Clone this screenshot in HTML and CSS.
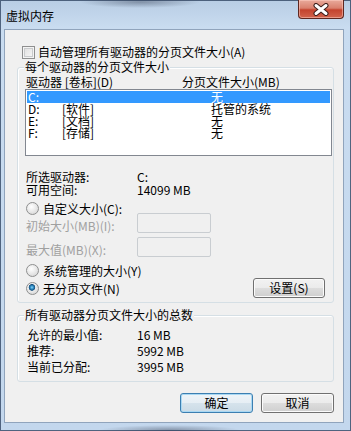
FILE: index.html
```html
<!DOCTYPE html>
<html lang="zh-CN">
<head>
    <meta charset="UTF-8">
    <title>虚拟内存</title>
    <link rel="stylesheet" href="styles.css">
</head>
<body>
    <div class="window">
        <div class="titlebar">
            <span class="title">虚拟内存</span>
            <div class="close-btn">
                <svg width="18" height="13" viewBox="0 0 18 13">
                    <path d="M4 2.5 L14 10.5 M14 2.5 L4 10.5" stroke="#3b1d1a" stroke-width="5" stroke-linecap="round"/>
                    <path d="M4 2.5 L14 10.5 M14 2.5 L4 10.5" stroke="#ffffff" stroke-width="3" stroke-linecap="round"/>
                </svg>
            </div>
        </div>

        <div class="client">
            <!-- case à cocher en haut -->
            <label class="check-row"><span class="checkbox"></span>自动管理所有驱动器的分页文件大小(A)</label>

            <!-- premier groupe -->
            <div class="group drives">
                <span class="legend">每个驱动器的分页文件大小</span>
                <div class="list-head">
                    <span class="head-drive">驱动器 [卷标](D)</span>
                    <span>分页文件大小(MB)</span>
                </div>
                <div class="listbox">
                    <div class="row selected"><span class="c1">C:</span><span class="c2"></span><span>无</span></div>
                    <div class="row"><span class="c1">D:</span><span class="c2">[软件]</span><span>托管的系统</span></div>
                    <div class="row"><span class="c1">E:</span><span class="c2">[文档]</span><span>无</span></div>
                    <div class="row"><span class="c1">F:</span><span class="c2">[存储]</span><span>无</span></div>
                </div>

                <div class="info">
                    <span>所选驱动器:</span><span>C:</span>
                    <span>可用空间:</span><span>14099 MB</span>
                </div>

                <div class="radio-row custom"><span class="radio"></span>自定义大小(C):</div>
                <div class="field-row first">
                    <span class="field-label">初始大小(MB)(I):</span>
                    <span class="textbox"></span>
                </div>
                <div class="field-row">
                    <span class="field-label">最大值(MB)(X):</span>
                    <span class="textbox"></span>
                </div>

                <div class="radio-row system"><span class="radio"></span>系统管理的大小(Y)</div>
                <div class="radio-row nofile">
                    <span class="radio-label"><span class="radio checked"></span>无分页文件(N)</span>
                    <button class="btn set-btn">设置(S)</button>
                </div>
            </div>

            <!-- deuxième groupe -->
            <div class="group totals">
                <span class="legend">所有驱动器分页文件大小的总数</span>
                <div class="totals-grid">
                    <span>允许的最小值:</span><span>16 MB</span>
                    <span>推荐:</span><span>5992 MB</span>
                    <span>当前已分配:</span><span>3995 MB</span>
                </div>
            </div>

            <div class="button-bar">
                <button class="btn default">确定</button>
                <button class="btn">取消</button>
            </div>
        </div>
    </div>
</body>
</html>
```

FILE: styles.css
```css
body {
    margin: 0;
    font-family: "Noto Sans CJK SC", "Liberation Sans", sans-serif;
    font-size: 12px;
    color: #000;
}
.window {
    width: 351px;
    height: 431px;
    box-sizing: border-box;
    padding: 0 7px 8px 4px;
    display: flex;
    flex-direction: column;
    background:
        radial-gradient(ellipse 60px 6px at 140px 2px, rgba(60, 70, 90, 0.45), transparent),
        radial-gradient(ellipse 70px 5px at 170px 430px, rgba(60, 70, 90, 0.45), transparent),
        linear-gradient(to bottom, #b8cde4 0, #c9dcf0 28px, #c3d7ed 100%);
    box-shadow: inset 0 0 0 1px rgba(40, 60, 90, 0.75);
}
.titlebar {
    height: 29px;
    display: flex;
    align-items: flex-start;
}
.title {
    margin: 8px 0 0 2px;
    line-height: 16px;
}
.close-btn {
    margin-left: auto;
    width: 44px;
    height: 18px;
    display: flex;
    align-items: center;
    justify-content: center;
    border: 1px solid #5e2720;
    border-top: none;
    border-radius: 0 0 4px 4px;
    background: linear-gradient(to bottom, #e9aa9b 0, #d9806e 45%, #c4432e 55%, #d2644d 100%);
    box-shadow: inset 0 0 0 1px rgba(255, 210, 200, 0.5);
}
.client {
    flex: 1;
    border: 1px solid #90a4bc;
    background-color: #f0f0f0;
    display: flex;
    flex-direction: column;
}
.check-row {
    display: flex;
    align-items: center;
    gap: 3px;
    margin: 15px 0 0 17px;
    line-height: 14px;
}
.checkbox {
    width: 11px;
    height: 11px;
    border: 1px solid #8e8f8f;
    background: linear-gradient(135deg, #dcdcdc, #fbfbfb);
    box-shadow: inset 0 0 0 1px #f4f4f4, inset 0 0 0 2px #c9cbcd;
}
.group {
    position: relative;
    border: 1px solid #d5dfe5;
    border-radius: 3px;
    box-shadow: inset 1px 1px 0 #fff;
}
.legend {
    position: absolute;
    top: -9px;
    left: 6px;
    padding: 0 1px;
    line-height: 16px;
    background-color: #f0f0f0;
}
.drives {
    margin: 8px 9px 0 12px;
    padding: 7px 0 4px 7px;
}
.list-head {
    display: flex;
    line-height: 14px;
    padding-left: 1px;
}
.head-drive {
    width: 156px;
}
.listbox {
    width: 305px;
    height: 64px;
    border: 1px solid #828790;
    background-color: #fff;
    padding-top: 1px;
    box-sizing: content-box;
}
.row {
    display: flex;
    height: 12px;
    line-height: 12px;
    margin: 0 1px;
    padding-left: 1px;
}
.row.selected {
    background-color: #3399ff;
    color: #fff;
}
.c1 {
    width: 34px;
}
.c2 {
    width: 149px;
}
.info {
    display: grid;
    grid-template-columns: 111px auto;
    line-height: 13px;
    margin-top: 14px;
    padding-left: 1px;
}
.radio-row {
    display: flex;
    align-items: center;
    gap: 4px;
    padding-left: 1px;
    line-height: 13px;
}
.radio-row.custom {
    margin-top: 6px;
    height: 12px;
}
.radio-row.system {
    margin-top: 7px;
}
.radio-row.nofile {
    margin-top: 1px;
    justify-content: space-between;
}
.radio-label {
    display: flex;
    align-items: center;
    gap: 4px;
}
.radio {
    width: 11px;
    height: 11px;
    border-radius: 50%;
    border: 1px solid #8e8f8f;
    background: radial-gradient(circle at 40% 35%, #ffffff 0, #e8e8e8 50%, #cfcfcf 100%);
}
.radio.checked {
    background:
        radial-gradient(circle at 45% 40%, #8fd6f7 0, #2f8ec6 1.6px, #174f7c 3px, rgba(23, 79, 124, 0) 3.6px),
        radial-gradient(circle at 40% 35%, #ffffff 0, #e8e8e8 50%, #cfcfcf 100%);
}
.field-row {
    display: flex;
    align-items: center;
    padding-left: 1px;
    margin-top: 4px;
}
.field-row.first {
    margin-top: -1px;
}
.field-label {
    width: 111px;
    color: #a0a0a0;
    line-height: 14px;
    padding-top: 5px;
}
.textbox {
    width: 72px;
    height: 18px;
    border: 1px solid #c9cdd1;
    border-radius: 2px;
    background-color: #f0f0f0;
}
.btn {
    width: 73px;
    height: 20px;
    padding: 0;
    font: inherit;
    line-height: 18px;
    color: #000;
    border: 1px solid #707070;
    border-radius: 3px;
    background: linear-gradient(to bottom, #f2f2f2 0, #ebebeb 50%, #dddddd 50%, #cfcfcf 100%);
    box-shadow: inset 0 0 0 1px #fbfbfb;
}
.set-btn {
    width: 72px;
    margin-right: 8px;
}
.btn.default {
    border-color: #3c7fb1;
    background: linear-gradient(to bottom, #eef4f8 0, #e6eef4 50%, #d6e3ec 50%, #cbdbe6 100%);
    box-shadow: inset 0 0 0 1px #a9d8f3;
}
.totals {
    margin: 12px 9px 0 12px;
    padding: 11px 0 6px 9px;
}
.totals-grid {
    display: grid;
    grid-template-columns: 110px auto;
    line-height: 16px;
}
.button-bar {
    display: flex;
    justify-content: flex-end;
    gap: 8px;
    margin: 11px 9px 0 0;
}
```
